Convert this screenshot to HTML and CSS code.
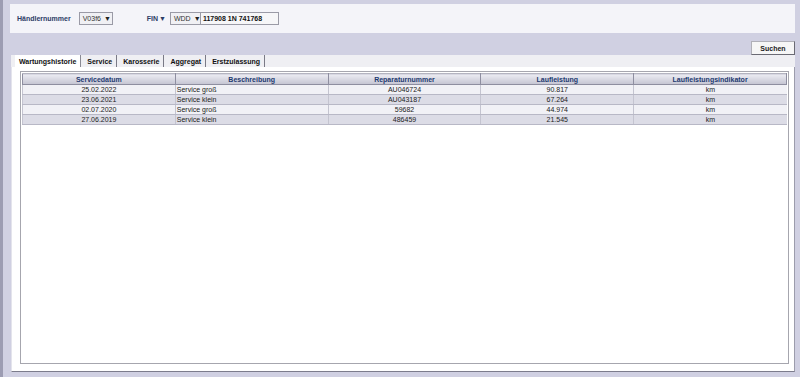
FILE: index.html
```html
<!DOCTYPE html>
<html lang="de">
<head>
<meta charset="UTF-8">
<title>Wartungshistorie</title>
<link rel="stylesheet" href="styles.css">
</head>
<body>

<!-- Suchleiste -->
<div class="topbar">
    <span class="label">Händlernummer</span>
    <span class="select dealer">V03f6 <span class="arrow">&#9660;</span></span>
    <span class="label fin">FIN<span class="arrow">&#9660;</span></span>
    <span class="select wmi">WDD <span class="arrow">&#9660;</span></span>
    <span class="vin">117908 1N 741768</span>
</div>

<div class="toolbar">
    <button class="btn">Suchen</button>
</div>

<div class="panel">
    <!-- Reiter -->
    <div class="tabs">
        <span class="tab active">Wartungshistorie</span>
        <span class="tab">Service</span>
        <span class="tab">Karosserie</span>
        <span class="tab">Aggregat</span>
        <span class="tab">Erstzulassung</span>
    </div>

    <div class="content">
        <div class="grid">
            <table class="history">
                <thead>
                    <tr>
                        <th>Servicedatum</th>
                        <th>Beschreibung</th>
                        <th>Reparaturnummer</th>
                        <th>Laufleistung</th>
                        <th>Laufleistungsindikator</th>
                    </tr>
                </thead>
                <tbody>
                    <tr>
                        <td>25.02.2022</td>
                        <td class="left">Service groß</td>
                        <td>AU046724</td>
                        <td>90.817</td>
                        <td>km</td>
                    </tr>
                    <tr class="alt">
                        <td>23.06.2021</td>
                        <td class="left">Service klein</td>
                        <td>AU043187</td>
                        <td>67.264</td>
                        <td>km</td>
                    </tr>
                    <tr>
                        <td>02.07.2020</td>
                        <td class="left">Service groß</td>
                        <td>59682</td>
                        <td>44.974</td>
                        <td>km</td>
                    </tr>
                    <tr class="alt">
                        <td>27.06.2019</td>
                        <td class="left">Service klein</td>
                        <td>486459</td>
                        <td>21.545</td>
                        <td>km</td>
                    </tr>
                </tbody>
            </table>
        </div>
    </div>
</div>

</body>
</html>
```

FILE: styles.css
```css
html, body {
    height: 100%;
}

body {
    margin: 0;
    font-family: "Liberation Sans", Arial, sans-serif;
    font-size: 7px;
    color: #222;
    background-color: #d0d0e2;
    border-left: 3px solid #9c9cb2;
    box-sizing: border-box;
    display: flex;
    flex-direction: column;
}

/* obere Leiste */
.topbar {
    display: flex;
    align-items: center;
    height: 29px;
    margin: 4px 5px 0 7px;
    padding-left: 7px;
    background-color: #f4f4f9;
}

.label {
    font-weight: bold;
    color: #2c3c66;
}

.select {
    display: inline-flex;
    align-items: center;
    height: 11px;
    padding: 0 3px;
    border: 1px solid #9a9aa6;
    background-color: #f0f0f4;
    color: #333;
    box-sizing: content-box;
}

.dealer {
    margin-left: 8px;
    width: 26px;
}

.arrow {
    font-size: 7px;
    margin-left: 3px;
    color: #222;
}

.fin {
    margin-left: 34px;
    color: #2c3c66;
}

.fin .arrow {
    margin-left: 1px;
    color: #2c3c66;
}

.wmi {
    margin-left: 4px;
    width: 23px;
}

.vin {
    display: inline-flex;
    align-items: center;
    height: 11px;
    width: 75px;
    padding-left: 2px;
    border: 1px solid #9a9aa6;
    border-left: none;
    background-color: #f6f6f8;
    font-weight: bold;
    color: #111;
}

/* Schaltfläche */
.toolbar {
    display: flex;
    justify-content: flex-end;
    margin: 8px 5px 0 0;
}

.btn {
    width: 44px;
    height: 14px;
    padding: 0;
    font-family: inherit;
    font-size: 7px;
    font-weight: bold;
    color: #222;
    background-color: #f6f6f6;
    border: 1px solid #6a6a74;
    border-top-color: #b0b0b8;
    border-left-color: #b0b0b8;
}

/* Reiter */
.panel {
    flex: 1;
    display: flex;
    flex-direction: column;
    margin: 0 5px 5px 8px;
}

.tabs {
    display: flex;
    height: 12px;
    padding-left: 4px;
    background-color: #efeff3;
}

.tab {
    display: flex;
    align-items: center;
    padding: 0 4px;
    font-weight: bold;
    color: #111;
    border-right: 1px solid #7a7a86;
    margin-right: 2px;
}

.tab.active {
    background-color: #fff;
    border-right: 1px solid #8a8a94;
}

.content {
    flex: 1;
    display: flex;
    background-color: #fff;
    padding: 4px 5px 7px 8px;
    border-left: 1px solid #e4e4ec;
    border-right: 1px solid #9c9cac;
    border-bottom: 1px solid #7c7c8c;
}

.grid {
    flex: 1;
    border: 1px solid #a6a6ae;
    padding: 1px;
}

/* Tabelle */
.history {
    width: 100%;
    border-collapse: collapse;
    table-layout: fixed;
}

.history th {
    height: 10px;
    padding: 0;
    font-weight: bold;
    color: #1e3a70;
    background: linear-gradient(#ececf2, #c4c4d2);
    border: 1px solid #8e8ea0;
    border-top-color: #b4b4c0;
}

.history td {
    height: 9px;
    padding: 0 1px;
    text-align: center;
    color: #222;
    background-color: #f1f1f6;
    border-bottom: 1px solid #b8b8c6;
    border-left: 1px solid #c4c4d0;
}

.history tr.alt td {
    background-color: #dcdce6;
}

.history td.left {
    text-align: left;
}
```
